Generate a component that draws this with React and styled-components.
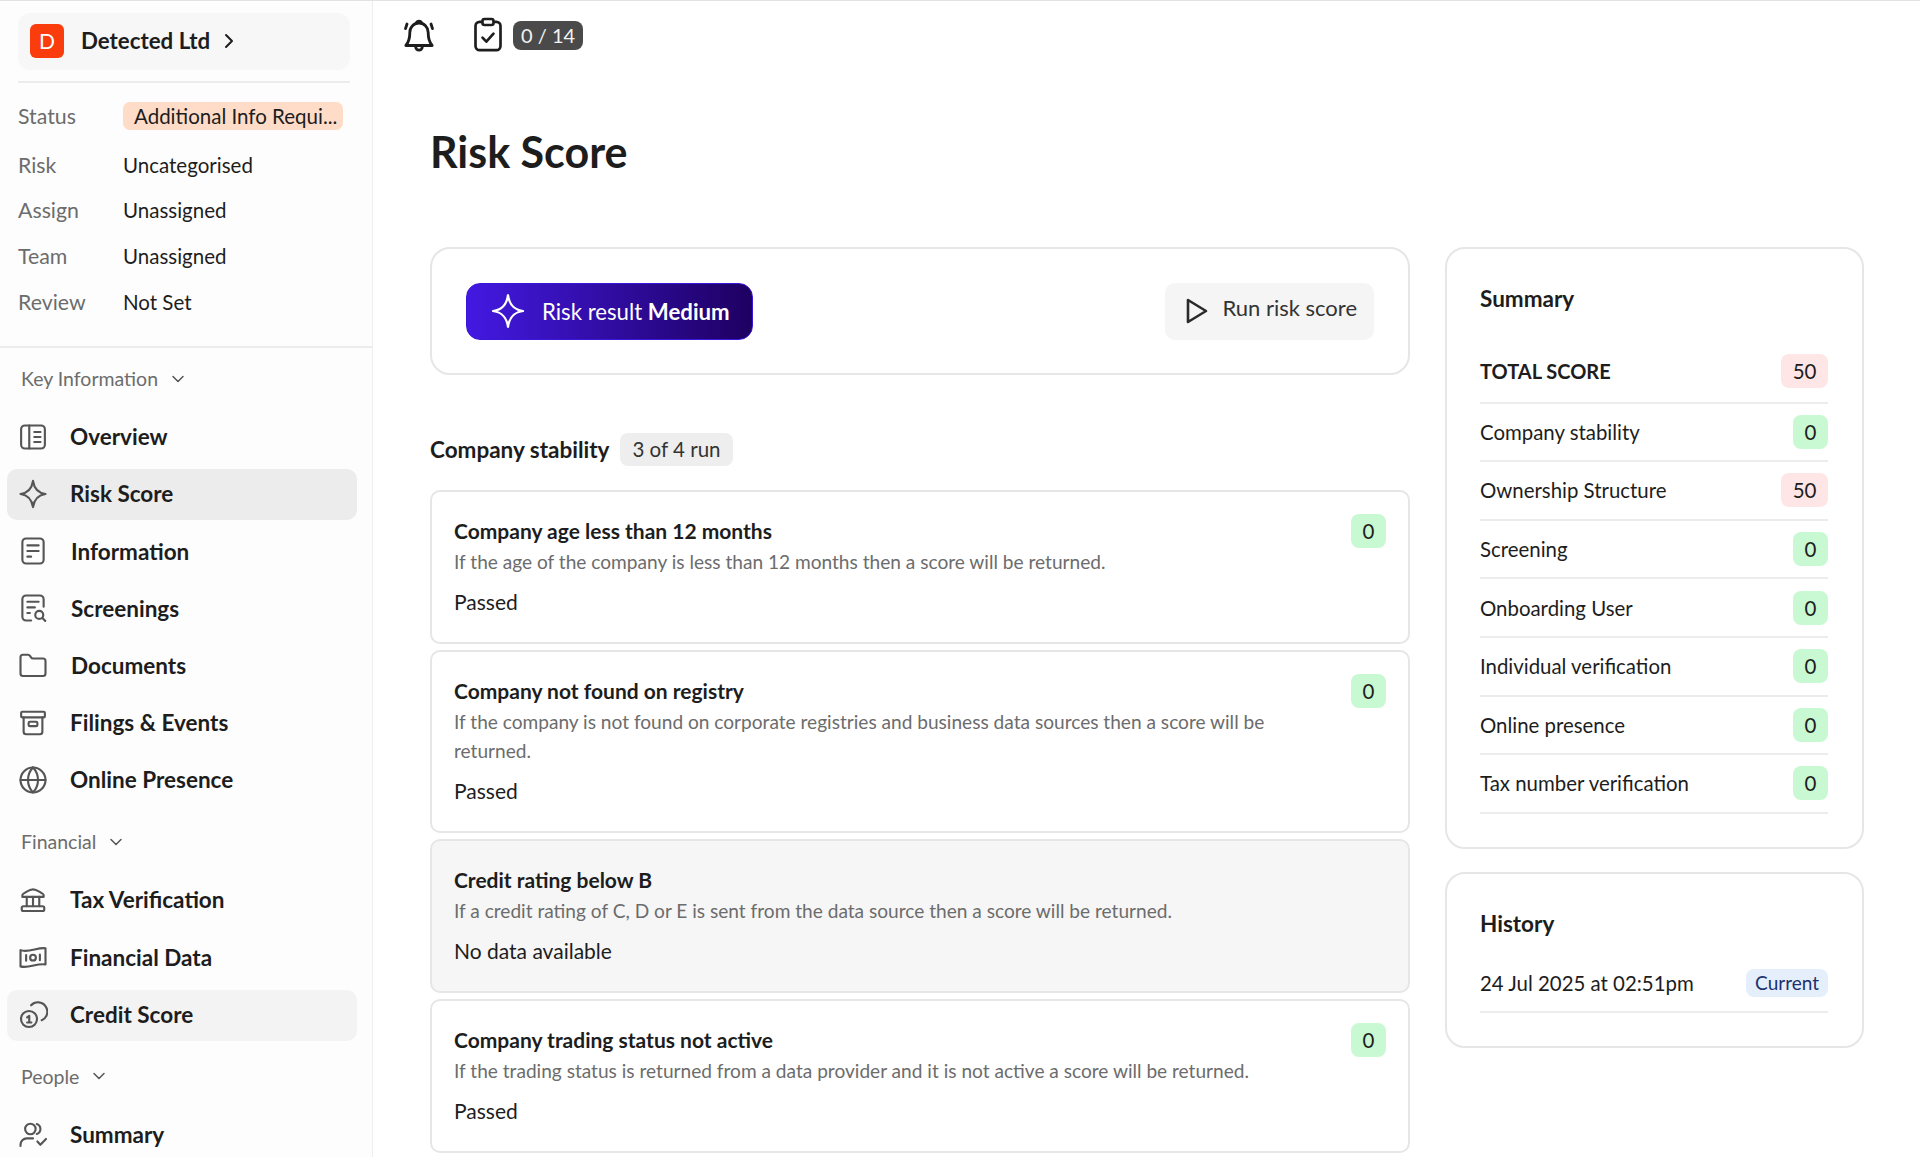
import React from "react";
import styled, { createGlobalStyle } from "styled-components";
import { ChevronRight, ChevronDown, Folder, Globe } from "lucide-react";

const GlobalStyle = createGlobalStyle`
  * { box-sizing: border-box; }
  html, body { margin: 0; padding: 0; height: 100%; overflow: hidden; background: #fff; }
  body { font-family: "Lato", "Noto Sans", sans-serif; color: #1d1d1d; font-size: 18px; }
`;

// Iconos propios
const Svg = ({ children, size = 30, sw = 1.7, color = "#555" }) => (
  <svg width={size} height={size} viewBox="0 0 24 24" fill="none" stroke={color} strokeWidth={sw} strokeLinecap="round" strokeLinejoin="round">
    {children}
  </svg>
);

const Star = (props) => (
  <Svg {...props}>
    <path d="M12 1.500c.9 6.200 3.600 9.600 10 10.500-6.400.9-9.100 4.300-10 10.500-.9-6.200-3.600-9.600-10-10.500 6.400-.9 9.100-4.300 10-10.500z" />
  </Svg>
);
const OverviewIcon = () => (
  <Svg>
    <rect x="2.500" y="2.800" width="19" height="18.400" rx="3" />
    <path d="M9 2.800v18.400M13 8h5M13 12h5M13 16h5" />
  </Svg>
);
const InfoIcon = () => (
  <Svg>
    <rect x="3.500" y="2" width="17" height="20" rx="3" />
    <path d="M7.500 7.500h9M7.500 12h9M7.500 16.500h3" />
  </Svg>
);
const ScreeningIcon = () => (
  <Svg>
    <path d="M10.500 22H6.500a3 3 0 0 1-3-3V5a3 3 0 0 1 3-3h11a3 3 0 0 1 3 3v6" />
    <path d="M7.500 7h9M7.500 11.500h6M7.500 16h2" />
    <circle cx="17" cy="17.500" r="3.200" />
    <path d="M19.500 20l2.300 2.300" />
  </Svg>
);
const ArchiveIcon = () => (
  <Svg>
    <rect x="2.500" y="3" width="19" height="4.500" rx="1" />
    <path d="M4.500 7.500V19a2 2 0 0 0 2 2h11a2 2 0 0 0 2-2V7.500" />
    <rect x="8.500" y="11" width="7" height="3.500" rx="1" />
  </Svg>
);
const BankIcon = () => (
  <Svg>
    <path d="M3.500 9.500V8c0-.8 5.500-4.500 8.500-4.500S20.500 7.200 20.500 8v1.500z" />
    <path d="M7 9.500V17M12 9.500V17M17 9.500V17" />
    <rect x="3" y="17" width="18" height="3.800" rx="1.300" />
  </Svg>
);
const MoneyIcon = () => (
  <Svg>
    <path d="M2 6.500c6 2.500 14-2.500 20-1.500v13c-6-1.500-14 3.500-20 1.500z" />
    <path d="M6.500 10.500v4.500M17.500 10v4.500" />
    <circle cx="12" cy="12.500" r="2.300" />
  </Svg>
);
const CreditIcon = () => (
  <Svg>
    <circle cx="8.800" cy="16" r="6.400" />
    <path d="M7.300 14.700l1.700-1.200v5.300M7.300 18.800h3.400" />
    <path d="M10.500 5a7.500 7.500 0 1 1 8.500 12" />
  </Svg>
);
const PeopleIcon = () => (
  <Svg>
    <circle cx="9.900" cy="8" r="4.200" />
    <path d="M15 4a4.200 4.200 0 0 1 0 8" />
    <path d="M2 21.500v-1a5 5 0 0 1 5-5h5" />
    <path d="M15.500 18l2.400 2.600 4.500-4.600" />
  </Svg>
);
const BellIcon = () => (
  <Svg size={40} sw={1.7} color="#1d1d1d">
    <path d="M12 4.200a5.500 5.500 0 0 0-5.500 5.500c0 4.300-.9 6.300-2.400 8h15.800c-1.500-1.700-2.400-3.700-2.400-8A5.500 5.500 0 0 0 12 4.200z" />
    <path d="M10.400 4.300a1.700 1.700 0 0 1 3.200 0" />
    <path d="M10 17.800v.7a2 2 0 0 0 4 0v-.7" />
    <path d="M4.800 4.800L3.900 7.600M19.200 4.800l.9 2.800" />
  </Svg>
);
const ClipboardIcon = () => (
  <Svg size={40} sw={1.6} color="#1d1d1d">
    <rect x="4.500" y="3.500" width="15" height="17" rx="2.500" />
    <rect x="8.700" y="1.800" width="6.600" height="3.600" rx="1.200" fill="#fff" />
    <path d="M8.700 13l2.300 2.400 4.300-4.800" />
  </Svg>
);
const PlayIcon = () => (
  <svg width="24" height="28" viewBox="0 0 24 28" fill="none" stroke="#2a2a2a" strokeWidth="2.600" strokeLinejoin="round">
    <path d="M3 3l18 11L3 25z" />
  </svg>
);

const navIcon = (Icon) => <Icon size={30} strokeWidth={1.7} color="#555" />;

const statusRows = [
  ["Risk", "Uncategorised"],
  ["Assign", "Unassigned"],
  ["Team", "Unassigned"],
  ["Review", "Not Set"],
];

const summaryRows = [
  ["Company stability", 0],
  ["Ownership Structure", 50],
  ["Screening", 0],
  ["Onboarding User", 0],
  ["Individual verification", 0],
  ["Online presence", 0],
  ["Tax number verification", 0],
];

const checks = [
  {
    title: "Company age less than 12 months",
    desc: "If the age of the company is less than 12 months then a score will be returned.",
    result: "Passed",
    score: 0,
  },
  {
    title: "Company not found on registry",
    desc: "If the company is not found on corporate registries and business data sources then a score will be returned.",
    result: "Passed",
    score: 0,
  },
  {
    title: "Credit rating below B",
    desc: "If a credit rating of C, D or E is sent from the data source then a score will be returned.",
    result: "No data available",
    muted: true,
  },
  {
    title: "Company trading status not active",
    desc: "If the trading status is returned from a data provider and it is not active a score will be returned.",
    result: "Passed",
    score: 0,
  },
];

const App = () => {
  return (
    <Page>
      <GlobalStyle />
      <Sidebar>
        <CompanyWrap>
          <CompanyButton>
            <Avatar>D</Avatar>
            <CompanyName>Detected Ltd</CompanyName>
            <ChevronRight size={24} strokeWidth={2} color="#1d1d1d" />
          </CompanyButton>
        </CompanyWrap>
        <Meta>
          <MetaRow $first>
            <MetaLabel>Status</MetaLabel>
            <StatusPill>Additional Info Requi...</StatusPill>
          </MetaRow>
          {statusRows.map(([label, value]) => (
            <MetaRow key={label}>
              <MetaLabel>{label}</MetaLabel>
              <MetaValue>{value}</MetaValue>
            </MetaRow>
          ))}
        </Meta>
        <Nav>
          <NavHeading>
            Key Information <ChevronDown size={20} strokeWidth={1.8} color="#555" />
          </NavHeading>
          <NavItem><OverviewIcon /> Overview</NavItem>
          <NavItem $bg="#ececec"><Star /> Risk Score</NavItem>
          <NavItem $gap="23px"><InfoIcon /> Information</NavItem>
          <NavItem $gap="23px"><ScreeningIcon /> Screenings</NavItem>
          <NavItem $gap="23px">{navIcon(Folder)} Documents</NavItem>
          <NavItem><ArchiveIcon /> Filings &amp; Events</NavItem>
          <NavItem>{navIcon(Globe)} Online Presence</NavItem>
          <NavHeading>
            Financial <ChevronDown size={20} strokeWidth={1.8} color="#555" />
          </NavHeading>
          <NavItem><BankIcon /> Tax Verification</NavItem>
          <NavItem><MoneyIcon /> Financial Data</NavItem>
          <NavItem $bg="#f3f3f3"><CreditIcon /> Credit Score</NavItem>
          <NavHeading>
            People <ChevronDown size={20} strokeWidth={1.8} color="#555" />
          </NavHeading>
          <NavItem><PeopleIcon /> Summary</NavItem>
        </Nav>
      </Sidebar>

      <Main>
        <Topbar>
          <BellIcon />
          <TaskGroup>
            <ClipboardIcon />
            <TaskCount>0 / 14</TaskCount>
          </TaskGroup>
        </Topbar>
        <Content>
          <Title>Risk Score</Title>
          <Columns>
            <LeftCol>
              <RiskCard>
                <RiskResult>
                  <Star size={36} sw={1.5} color="#fff" />
                  <span>Risk result <b>Medium</b></span>
                </RiskResult>
                <RunButton>
                  <PlayIcon />
                  <RunLabel>Run risk score</RunLabel>
                </RunButton>
              </RiskCard>
              <SectionHead>
                <SectionTitle>Company stability</SectionTitle>
                <RunCount>3 of 4 run</RunCount>
              </SectionHead>
              <CheckList>
                {checks.map((c) => (
                  <CheckCard key={c.title} $muted={c.muted}>
                    <CheckText>
                      <CheckTitle>{c.title}</CheckTitle>
                      <CheckDesc>{c.desc}</CheckDesc>
                      <CheckResult>{c.result}</CheckResult>
                    </CheckText>
                    {c.score !== undefined && <Score $value={c.score}>{c.score}</Score>}
                  </CheckCard>
                ))}
              </CheckList>
            </LeftCol>
            <RightCol>
              <SideCard>
                <SideTitle>Summary</SideTitle>
                <SideBlock>
                  <SummaryRow $total>
                    <TotalLabel>TOTAL SCORE</TotalLabel>
                    <Score $value={50}>50</Score>
                  </SummaryRow>
                  {summaryRows.map(([label, value]) => (
                    <SummaryRow key={label}>
                      <span>{label}</span>
                      <Score $value={value}>{value}</Score>
                    </SummaryRow>
                  ))}
                </SideBlock>
              </SideCard>
              <SideCard>
                <SideTitle>History</SideTitle>
                <HistoryBlock>
                  <SummaryRow>
                    <span>24 Jul 2025 at 02:51pm</span>
                    <CurrentTag>Current</CurrentTag>
                  </SummaryRow>
                </HistoryBlock>
              </SideCard>
            </RightCol>
          </Columns>
        </Content>
      </Main>
    </Page>
  );
};

export default App;

const Border = "#e6e6e6";

const Page = styled.div`
  display: flex;
  height: 100vh;
  overflow: hidden;
  border-top: 1px solid #e2e2e2;
`;

// Sidebar

const Sidebar = styled.aside`
  width: 373px;
  flex-shrink: 0;
  background: #fdfdfd;
  border-right: 1px solid #eeeeee;
  overflow: hidden;
`;

const CompanyWrap = styled.div`
  margin: 12px 22px 0 18px;
  padding-bottom: 11px;
  border-bottom: 2px solid #ececec;
`;

const CompanyButton = styled.div`
  display: flex;
  align-items: center;
  height: 57px;
  padding: 0 0 2px 12px;
  background: #f7f7f7;
  border-radius: 12px;
`;

const Avatar = styled.div`
  width: 34px;
  height: 34px;
  display: flex;
  align-items: center;
  justify-content: center;
  border-radius: 6px;
  background: #fb3c0c;
  color: #fff;
  font-size: 21px;
  margin-right: 17px;
`;

const CompanyName = styled.span`
  font-size: 22.300px;
  font-weight: 700;
  margin-right: 7px;
`;

const Meta = styled.div`
  padding: 10px 22px 21px 18px;
  border-bottom: 2px solid #ececec;
`;

const MetaRow = styled.div`
  display: grid;
  grid-template-columns: 105px minmax(0, 1fr);
  align-items: center;
  height: 45.750px;
  margin-bottom: ${(props) => (props.$first ? "3px" : "0")};
`;

const MetaLabel = styled.span`
  color: #6c6c6c;
  font-size: 21.300px;
`;

const MetaValue = styled.span`
  font-size: 20.500px;
`;

const StatusPill = styled.span`
  height: 28px;
  line-height: 28px;
  padding-left: 11px;
  margin-right: 7px;
  background: #ffdcc8;
  border-radius: 7px;
  font-size: 20.500px;
  white-space: nowrap;
`;

const Nav = styled.nav`
  padding: 0 15px 0 7px;
`;

const NavHeading = styled.div`
  display: flex;
  align-items: center;
  gap: 10px;
  height: 32px;
  margin: 15px 0 17.500px 14px;
  color: #6c6c6c;
  font-size: 19.500px;

  &:not(:first-child) {
    margin-top: 19.500px;
  }
`;

const NavItem = styled.div`
  display: flex;
  align-items: center;
  gap: ${(props) => props.$gap || "22px"};
  height: 51px;
  margin-bottom: 6.200px;
  padding: 0 0 2px 11px;
  border-radius: 10px;
  background: ${(props) => props.$bg || "transparent"};
  font-size: 22.500px;
  font-weight: 700;
`;

// Contenido

const Main = styled.main`
  flex: 1;
  min-width: 0;
`;

const Topbar = styled.div`
  display: flex;
  align-items: center;
  gap: 29px;
  height: 69px;
  padding-left: 26px;
`;

const TaskGroup = styled.div`
  display: flex;
  align-items: center;
  gap: 5px;
`;

const TaskCount = styled.span`
  height: 29px;
  line-height: 29px;
  padding: 0 8px;
  border-radius: 8px;
  background: #4a4a4a;
  color: #f2f2f2;
  font-size: 20px;
`;

const Content = styled.div`
  padding: 0 56px 0 57px;
`;

const Title = styled.h1`
  margin: 58px 0 71px;
  font-size: 43px;
  line-height: 48px;
  font-weight: 700;
`;

const Columns = styled.div`
  display: flex;
  align-items: flex-start;
  gap: 35px;
`;

const LeftCol = styled.div`
  flex: 1;
  min-width: 0;
`;

const RightCol = styled.div`
  width: 419px;
  flex-shrink: 0;
  display: flex;
  flex-direction: column;
  gap: 23px;
`;

const RiskCard = styled.div`
  display: flex;
  align-items: center;
  justify-content: space-between;
  height: 128px;
  padding: 0 34px;
  border: 2px solid ${Border};
  border-radius: 20px;
`;

const RiskResult = styled.div`
  display: flex;
  align-items: center;
  gap: 16px;
  width: 287px;
  height: 57px;
  padding-left: 23px;
  border: 1px solid #3a17d8;
  border-radius: 14px;
  background: linear-gradient(90deg, #4319e2, #1e0061);
  color: #fff;
  font-size: 22.200px;
`;

const RunButton = styled.div`
  display: flex;
  align-items: center;
  gap: 13px;
  height: 57px;
  padding: 0 17px 0 20px;
  border-radius: 10px;
  background: #f5f5f5;
  font-size: 22px;
  color: #333;
`;

const RunLabel = styled.span`
  margin-bottom: 8px;
`;

const SectionHead = styled.div`
  display: flex;
  align-items: center;
  gap: 11px;
  margin: 58px 0 24px;
`;

const SectionTitle = styled.span`
  font-size: 22.500px;
  font-weight: 700;
`;

const RunCount = styled.span`
  height: 33px;
  line-height: 33px;
  padding: 0 12px;
  border-radius: 8px;
  background: #eeeeee;
  font-size: 20.500px;
  color: #333;
`;

const CheckList = styled.div`
  display: flex;
  flex-direction: column;
  gap: 6px;
`;

const CheckCard = styled.div`
  display: flex;
  justify-content: space-between;
  align-items: flex-start;
  padding: 22px 22px 26px;
  border: 2px solid ${Border};
  border-radius: 10px;
  background: ${(props) => (props.$muted ? "#f6f6f6" : "#fff")};
`;

const CheckText = styled.div`
  max-width: 830px;
`;

const CheckTitle = styled.div`
  height: 34px;
  line-height: 33px;
  font-size: 21px;
  font-weight: 700;
`;

const CheckDesc = styled.div`
  margin-top: -1px;
  font-size: 19.100px;
  line-height: 29px;
  color: #6c6c6c;
`;

const CheckResult = styled.div`
  margin-top: 11px;
  font-size: 21px;
  line-height: 29px;
`;

const Score = styled.span`
  flex-shrink: 0;
  height: 34px;
  line-height: 34px;
  padding: 0 11.500px;
  border-radius: 8px;
  font-size: 20.500px;
  background: ${(props) => (props.$value > 0 ? "#fde6e5" : "#c9f9d2")};
`;

const SideCard = styled.section`
  padding: 38px 34px 33px 33px;
  border: 2px solid ${Border};
  border-radius: 20px;
`;

const SideTitle = styled.h2`
  margin: 0;
  font-size: 22.500px;
  line-height: 24px;
  font-weight: 700;
`;

const SideBlock = styled.div`
  margin-top: 34px;
`;

const HistoryBlock = styled.div`
  margin-top: 19px;
`;

const SummaryRow = styled.div`
  display: flex;
  align-items: center;
  justify-content: space-between;
  height: 58.600px;
  padding-bottom: ${(props) => (props.$total ? "4px" : "0")};
  border-bottom: 2px solid #ececec;
  font-size: 20.400px;
`;

const TotalLabel = styled.span`
  font-size: 20px;
  font-weight: 700;
`;

const CurrentTag = styled.span`
  height: 28px;
  line-height: 28px;
  padding: 0 9px;
  border-radius: 8px;
  background: #e5effc;
  color: #1c2f6e;
  font-size: 19px;
`;
